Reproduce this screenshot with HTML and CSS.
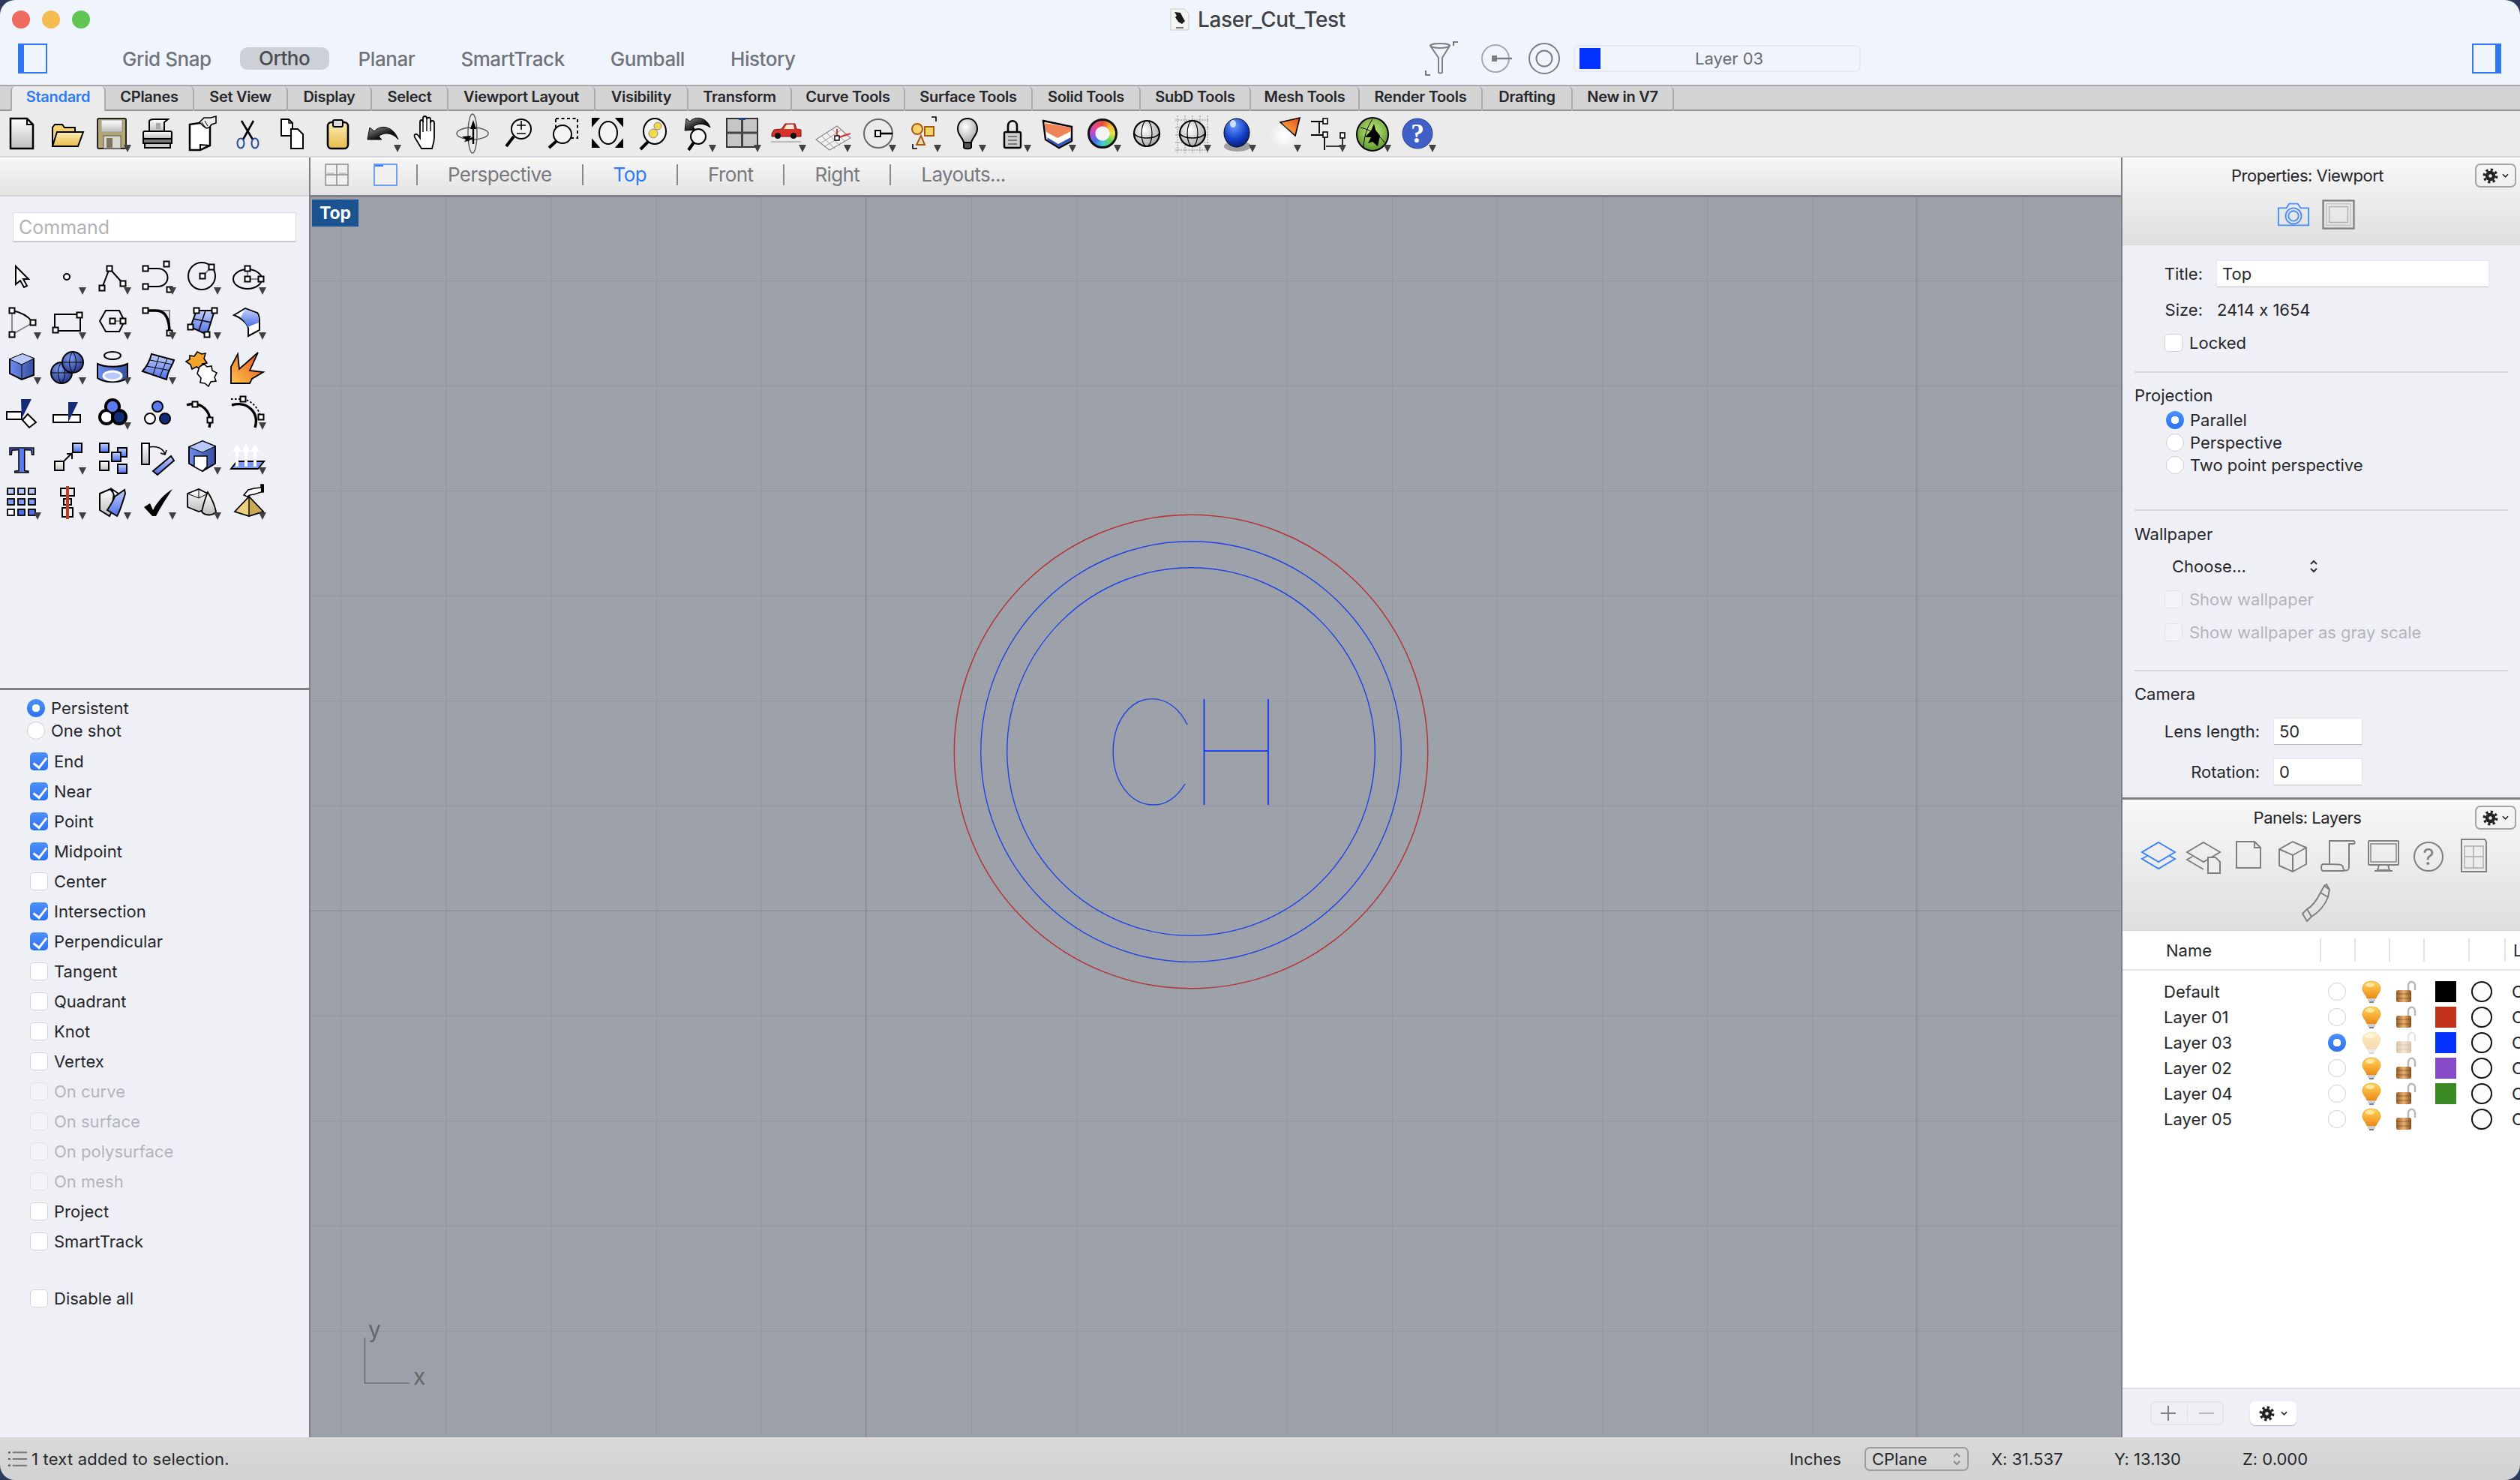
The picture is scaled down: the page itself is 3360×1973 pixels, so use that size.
FILE: index.html
```html
<!DOCTYPE html>
<html lang="en">
<head>
<meta charset="utf-8">
<title>Laser_Cut_Test</title>
<link rel="stylesheet" href="styles.css">
</head>
<body>
<svg class="defs" aria-hidden="true">
  <defs>
    <linearGradient id="gB" x1="0" y1="0" x2="0" y2="1"><stop offset="0" stop-color="#c3d0fa"/><stop offset="1" stop-color="#4c6ee8"/></linearGradient>
    <linearGradient id="gBh" x1="0" y1="0" x2="1" y2="0"><stop offset="0" stop-color="#6f8cf0"/><stop offset="1" stop-color="#34509f"/></linearGradient>
    <linearGradient id="gY" x1="0" y1="0" x2="0" y2="1"><stop offset="0" stop-color="#fbeeb4"/><stop offset="1" stop-color="#e9bb4c"/></linearGradient>
    <linearGradient id="gS" x1="0" y1="0" x2="0" y2="1"><stop offset="0" stop-color="#fff"/><stop offset="1" stop-color="#bdbdbd"/></linearGradient>
    <linearGradient id="gK" x1="0" y1="0" x2="1" y2="1"><stop offset="0" stop-color="#999"/><stop offset=".6" stop-color="#111"/></linearGradient>
    <linearGradient id="gO" x1="0" y1="1" x2="1" y2="0"><stop offset="0" stop-color="#fbc64a"/><stop offset="1" stop-color="#ea4a1e"/></linearGradient>
    <linearGradient id="gBulb" x1="0" y1="0" x2="0" y2="1"><stop offset="0" stop-color="#ffd65c"/><stop offset="1" stop-color="#ee8a16"/></linearGradient>
    <linearGradient id="gLock" x1="0" y1="0" x2="1" y2="0"><stop offset="0" stop-color="#9a5a1e"/><stop offset=".5" stop-color="#e8b478"/><stop offset="1" stop-color="#8a4e18"/></linearGradient>
    <radialGradient id="gSph" cx=".4" cy=".3" r=".8"><stop offset="0" stop-color="#7f9cf5"/><stop offset="1" stop-color="#1a2a78"/></radialGradient>
    <radialGradient id="gSil" cx=".4" cy=".35" r=".8"><stop offset="0" stop-color="#fff"/><stop offset="1" stop-color="#999"/></radialGradient>
    <radialGradient id="gBlue" cx=".4" cy=".25" r=".8"><stop offset="0" stop-color="#6f9cff"/><stop offset=".6" stop-color="#1240c8"/><stop offset="1" stop-color="#051c6a"/></radialGradient>
    <radialGradient id="gGreen" cx=".5" cy=".4" r=".7"><stop offset="0" stop-color="#c6ec7e"/><stop offset="1" stop-color="#4c8a1e"/></radialGradient>
    <radialGradient id="gGlow" cx=".5" cy=".5" r=".5"><stop offset="0" stop-color="#fff"/><stop offset="1" stop-color="#ebebeb"/></radialGradient>
    <rect id="sq" x="-3.5" y="-3.5" width="7" height="7" fill="#fff" stroke="#000" stroke-width="2"/>
    <symbol id="bulb" viewBox="0 0 26 30"><path d="M13 1C6 1 1 5 1 11c0 5 4 7 6 13h12c2-6 6-8 6-13C25 5 20 1 13 1Z" fill="url(#gBulb)" stroke="#d98a1a" stroke-width=".6"/><ellipse cx="11" cy="6" rx="6" ry="3" fill="#ffeeb0" opacity=".8"/><rect x="8" y="24" width="10" height="4" fill="#c9ccd0"/><rect x="10" y="28" width="6" height="2" fill="#7c8088"/></symbol>
    <symbol id="lock" viewBox="0 0 28 30"><path d="M17 14V7c0-7 9-7 9 0v6" fill="none" stroke="#b6b6b6" stroke-width="2.4"/><rect x="1" y="13" width="20" height="16" rx="2.5" fill="url(#gLock)"/><path d="M1 18h20M1 24h20" stroke="#6e3e10" stroke-width="1" opacity=".6"/></symbol>
    <symbol id="gear" viewBox="0 0 24 24"><circle cx="12" cy="12" r="9.4" fill="none" stroke="#222" stroke-width="4" stroke-dasharray="3.7 3.68"/><circle cx="12" cy="12" r="7.6" fill="#222"/><circle cx="12" cy="12" r="2.6" fill="#e8e8e8"/></symbol>
  </defs>
</svg>

<div class="window">
  <header class="titlebar">
    <div class="title-row">
      <div class="lights"><span class="light red"></span><span class="light yellow"></span><span class="light green"></span></div>
      <div class="doc-title">
        <svg class="doc-icon" viewBox="0 0 26 30"><path d="M1 1H19L25 7V29H1Z" fill="#f4f4f4" stroke="#c8c8c8"/><path d="M6 5l8 1 3 6 3 5-4 4-5-3-4-6 2-2Z" fill="#1b1b1b"/><path d="M8 26h10" stroke="#777" stroke-width="2"/></svg>
        <span>Laser_Cut_Test</span>
      </div>
      <div></div>
    </div>
    <div class="tool-row">
      <span class="side-toggle t-left"></span>
      <nav class="modes">
        <span class="mode">Grid Snap</span>
        <span class="mode on">Ortho</span>
        <span class="mode">Planar</span>
        <span class="mode">SmartTrack</span>
        <span class="mode">Gumball</span>
        <span class="mode">History</span>
      </nav>
      <div class="status-icons">
        <svg class="si si-funnel" viewBox="0 0 46 46"><path d="M7 6c0-4 26-4 26 0L23 22V41c0 2-5 2-5 0V22Z M7 6c4 4 22 4 26 0" fill="none" stroke="#7c7e84" stroke-width="2"/><path d="M38 6V1h6M1 39v6h6" fill="none" stroke="#555" stroke-width="1.6"/></svg>
        <svg class="si" viewBox="0 0 46 46"><ellipse cx="20" cy="23" rx="18" ry="18" fill="none" stroke="#a6a8ae" stroke-width="2"/><rect x="15" y="19" width="7" height="8" fill="#7a7c82"/><path d="M22 23h20" stroke="#7a7c82" stroke-width="2.4"/></svg>
        <svg class="si" viewBox="0 0 46 46"><circle cx="23" cy="23" r="20" fill="none" stroke="#7c7e84" stroke-width="2"/><circle cx="23" cy="23" r="10.500" fill="none" stroke="#7c7e84" stroke-width="2"/></svg>
      </div>
      <div class="layer-box"><span class="layer-swatch"></span><span class="layer-name">Layer 03</span></div>
      <span class="side-toggle t-right"></span>
    </div>
  </header>

  <nav class="tabs">
    <span class="tab on">Standard</span><span class="tab">CPlanes</span><span class="tab">Set View</span><span class="tab">Display</span><span class="tab">Select</span><span class="tab">Viewport Layout</span><span class="tab">Visibility</span><span class="tab">Transform</span><span class="tab">Curve Tools</span><span class="tab">Surface Tools</span><span class="tab">Solid Tools</span><span class="tab">SubD Tools</span><span class="tab">Mesh Tools</span><span class="tab">Render Tools</span><span class="tab">Drafting</span><span class="tab">New in V7</span>
  </nav>

  <div class="toolbar">
    <span class="cell"><svg class="ic" viewBox="0 0 60 60"><path d="M14 10H36L44 18V50H14Z" fill="url(#gS)" stroke-width="2.5"/><path d="M36 10V18H44"/></svg></span>
    <span class="cell"><svg class="ic" viewBox="0 0 60 60"><path d="M10 46V22l3-4h10l3 4h14v6" fill="#f6d46a"/><path d="M10 47L16 28H51L44 47Z" fill="url(#gY)"/></svg></span>
    <span class="cell dd"><svg class="ic" viewBox="0 0 60 60"><rect x="10" y="10" width="38" height="40" rx="2" fill="#b3a670" stroke="#222"/><rect x="15" y="12" width="28" height="16" fill="url(#gS)" stroke="#999" stroke-width="1"/><rect x="18" y="33" width="23" height="17" fill="#d8d8d0" stroke="#555" stroke-width="1"/><rect x="22" y="36" width="8" height="13" fill="#7c7660" stroke="none"/></svg></span>
    <span class="cell"><svg class="ic" viewBox="0 0 60 60"><path d="M19 28V14c0-3 4-3 6-3h19l-5 4v13Z" fill="url(#gS)"/><rect x="11" y="27" width="38" height="10" rx="2" fill="url(#gS)"/><rect x="11" y="37" width="38" height="6" fill="#777"/><rect x="13" y="43" width="34" height="6" fill="#ccc"/><rect x="28" y="16" width="6" height="8" fill="#aaa" stroke="none"/></svg></span>
    <span class="cell"><svg class="ic" viewBox="0 0 60 60"><path d="M13 18L40 14V46L27 52H13Z" fill="#fff" stroke-width="2.5"/><path d="M27 52V45L40 46"/><path d="M26 15l6-6h9l7-2v9l-6 2-3 4-4 1-4-3Z" fill="#eee" stroke-width="1.6"/><path d="M29 15l4 6M33 13l4 7" stroke-width="1"/></svg></span>
    <span class="cell"><svg class="ic" viewBox="0 0 60 60"><path d="M22 13L37 38M38 13L24 38" stroke-width="2.6"/><ellipse cx="21" cy="43" rx="4.500" ry="6.500" stroke="#27509c"/><ellipse cx="40" cy="43" rx="4.500" ry="6.500" stroke="#27509c"/></svg></span>
    <span class="cell"><svg class="ic" viewBox="0 0 60 60"><path d="M15 11H25L30 16V33H15Z" fill="#fff"/><path d="M25 11v5h5" stroke-width="1.4"/><path d="M28 24H37L44 31V50H28Z" fill="#fff"/></svg></span>
    <span class="cell"><svg class="ic" viewBox="0 0 60 60"><rect x="17" y="15" width="27" height="35" rx="5" fill="url(#gY)" stroke-width="2.6"/><rect x="24" y="12" width="13" height="9" rx="2" fill="#ddd"/></svg></span>
    <span class="cell dd"><svg class="ic" viewBox="0 0 60 60"><path d="M10 38L13 22L19 27C27 18 44 19 51 38C43 28 31 28 25 34L29 38Z" fill="url(#gK)" stroke="#000" stroke-width="1"/></svg></span>
    <span class="cell"><svg class="ic" viewBox="0 0 60 60"><path d="M22 50L13 35C11 31 15 29 18 33L20 36V15C20 11 24 11 24 15V10C24 6 29 6 29 10V11C29 8 34 8 34 11V16C34 12 39 12 39 16V35C39 42 37 45 36 50Z" fill="#fff" stroke-width="1.8"/><path d="M24 14V28M29 11V27M34 14V27" stroke-width="1.4"/></svg></span>
    <span class="cell"><svg class="ic" viewBox="0 0 60 60"><ellipse cx="30" cy="30" rx="6" ry="26" stroke="#555" stroke-width="1.4"/><ellipse cx="30" cy="30" rx="21" ry="8" stroke="#555" stroke-width="1.4"/><path d="M31 16V44M24 36l-2 3 8-3" stroke-width="2.4"/><path d="M31 12l4 12h-8ZM16 34l12-1-3 8Z" fill="#000" stroke="none"/></svg></span>
    <span class="cell"><svg class="ic" viewBox="0 0 60 60"><circle cx="35" cy="24" r="13" fill="#f4f4f4"/><path d="M25 34L15 47" stroke-width="4"/><path d="M29 19h12M35 13v12M29 30h12" stroke-width="1.6"/></svg></span>
    <span class="cell"><svg class="ic" viewBox="0 0 60 60"><rect x="21" y="10" width="29" height="26" stroke-dasharray="4 3.500"/><circle cx="30" cy="31" r="12" fill="#f4f4f4"/><path d="M22 40L12 49" stroke-width="4"/></svg></span>
    <span class="cell"><svg class="ic" viewBox="0 0 60 60"><ellipse cx="31" cy="29" rx="12" ry="15" fill="#f4f4f4"/><path d="M10 10h8l-8 9ZM50 10h-8l8 9ZM10 48h8l-8-9ZM50 48h-8l8-9Z" fill="#000"/></svg></span>
    <span class="cell"><svg class="ic" viewBox="0 0 60 60"><ellipse cx="33" cy="27" rx="15" ry="17" fill="#f4f4f4"/><circle cx="37" cy="20" r="5" fill="#f2da4a" stroke="#888" stroke-width="1"/><circle cx="31" cy="30" r="6" fill="#f2da4a" stroke="#888" stroke-width="1"/><path d="M24 41L14 51" stroke-width="4"/></svg></span>
    <span class="cell dd"><svg class="ic" viewBox="0 0 60 60"><path d="M13 26L15 10 20 14C27 6 42 8 47 22 39 16 30 16 24 21L27 25Z" fill="url(#gK)" stroke="#000" stroke-width="1"/><circle cx="31" cy="34" r="10" fill="#f4f4f4"/><path d="M25 42L18 52" stroke-width="4"/></svg></span>
    <span class="cell dd"><svg class="ic" viewBox="0 0 60 60"><rect x="9" y="10" width="41" height="38" fill="#c6c6c6" stroke="#333" stroke-width="2"/><path d="M29.500 10V48M9 29H50" stroke="#444" stroke-width="3"/><path d="M25 11h9" stroke="#224c99" stroke-width="2"/></svg></span>
    <span class="cell dd"><svg class="ic" viewBox="0 0 60 60"><path d="M9 30l3-5 10-1 5-7h13l2 7 6 1v9H9Z" fill="#d73026" stroke="#7e1010" stroke-width="1"/><path d="M29 18h9l1 6H25Z" fill="#f6e6dc" stroke="none"/><circle cx="17" cy="33" r="4" fill="#111" stroke="none"/><circle cx="38" cy="33" r="4" fill="#111" stroke="none"/><path d="M8 41H48" stroke="#bbb" stroke-width="2"/></svg></span>
    <span class="cell dd"><svg class="ic" viewBox="0 0 60 60"><path d="M8 38L36 20 54 36 26 52Z" fill="#f2f2f2" stroke="#888" stroke-width="1.2"/><path d="M15 33l18 17M22 29l18 17M29 24l18 17M14 43L42 25M20 47L48 30" stroke="#999" stroke-width="1"/><path d="M36 36L54 30M36 36V24" stroke="#d33" stroke-width="2"/><rect x="33" y="33" width="6" height="6" fill="#fff" stroke="#000" stroke-width="1.4"/></svg></span>
    <span class="cell dd"><svg class="ic" viewBox="0 0 60 60"><ellipse cx="31" cy="30" rx="19" ry="19" stroke="#666"/><rect x="27" y="26" width="7" height="8" fill="#fff"/><path d="M34 30h16" stroke-width="2.6"/></svg></span>
    <span class="cell dd"><svg class="ic" viewBox="0 0 60 60"><path d="M42 8h6v6" stroke-width="1.6"/><path d="M17 44v6h6" stroke-width="1.6"/><circle cx="23" cy="24" r="7" fill="#f4d36a" stroke="#a65a14"/><rect x="33" y="21" width="12" height="12" fill="#f4d36a" stroke="#a65a14"/><path d="M28 33l5 12H22Z" fill="#eadfae" stroke="#a65a14"/></svg></span>
    <span class="cell dd"><svg class="ic" viewBox="0 0 60 60"><path d="M30 10c-7 0-13 5-13 14 0 8 7 12 8 18h10c1-6 8-10 8-18 0-9-6-14-13-14Z" fill="url(#gSil)" stroke-width="2"/><path d="M25 42h10v6c0 3-10 3-10 0Z" fill="#555"/></svg></span>
    <span class="cell dd"><svg class="ic" viewBox="0 0 60 60"><path d="M24 30V20c0-9 12-9 12 0v10" stroke-width="2.6"/><rect x="19" y="28" width="22" height="21" rx="2" fill="#cfcfcf" stroke-width="2.4"/><path d="M24 34h12M24 39h12M24 44h12" stroke="#777" stroke-width="2"/></svg></span>
    <span class="cell dd"><svg class="ic" viewBox="0 0 60 60"><path d="M11 13L49 21V40L32 49 14 38Z" fill="#fff" stroke-width="2.4"/><path d="M12 16L48 22V27L30 36 15 28Z" fill="#ee8458" stroke="none"/><path d="M16 35l15 9 17-9v4L32 48 17 39Z" fill="#3254b4" stroke="none"/></svg></span>
    <span class="cell dd"><span class="wheel"></span></span>
    <span class="cell"><svg class="ic" viewBox="0 0 60 60"><circle cx="29" cy="30" r="17" fill="url(#gSil)" stroke-width="2.2"/><ellipse cx="29" cy="30" rx="7" ry="17" stroke-width="1.2"/><path d="M12 30C18 38 40 38 46 30" stroke-width="1.4"/></svg></span>
    <span class="cell dd"><svg class="ic" viewBox="0 0 60 60"><path d="M7 12H53M7 22H53M7 32H53M7 42H53M7 52H53M10 6V56M20 6V56M30 6V56M40 6V56M50 6V56" stroke="#888" stroke-width="1" stroke-dasharray="2 1.500"/><circle cx="30" cy="30" r="17" fill="url(#gSil)" stroke-width="2.2"/><ellipse cx="30" cy="30" rx="7" ry="17" stroke-width="1.2"/><path d="M13 30C19 38 41 38 47 30" stroke-width="1.4"/></svg></span>
    <span class="cell dd"><svg class="ic" viewBox="0 0 60 60"><ellipse cx="30" cy="47" rx="18" ry="7" fill="#555" stroke="none" opacity=".5"/><ellipse cx="29" cy="29" rx="17" ry="19" fill="url(#gBlue)" stroke="#000" stroke-width="1"/><ellipse cx="24" cy="17" rx="4" ry="5" fill="#cfe0ff" stroke="none"/></svg></span>
    <span class="cell dd"><svg class="ic" viewBox="0 0 60 60"><circle cx="32" cy="32" r="20" fill="url(#gGlow)" stroke="none"/><path d="M27 15L53 9 47 33Z" fill="url(#gO)" stroke="#000" stroke-width="1.600"/><path d="M27 15L47 33 33 20Z" fill="#fff" stroke="none"/></svg></span>
    <span class="cell dd"><svg class="ic" viewBox="0 0 60 60"><path d="M8 14H24M19 14V30M8 32H24M26 52V32" stroke-width="1.8"/><rect x="24" y="10" width="6" height="7" fill="#fff" stroke-width="1.6"/><rect x="24" y="28" width="6" height="7" fill="#fff" stroke-width="1.6"/><rect x="47" y="29" width="6" height="7" fill="#fff" stroke-width="1.6"/><path d="M50 36V52M28 47H48" stroke-width="1.600"/></svg></span>
    <span class="cell dd"><svg class="ic" viewBox="0 0 60 60"><ellipse cx="30" cy="31" rx="21" ry="22" fill="url(#gGreen)" stroke="#000" stroke-width="2"/><path d="M20 35l8-9 4-9 2 8 6 8-3 14-7-6-6 2 4-8Z" fill="#000" stroke="none"/><path d="M30 11C22 22 18 38 18 50M14 22C24 24 40 32 46 42" stroke-width="1"/></svg></span>
    <span class="cell dd"><svg class="ic" viewBox="0 0 60 60"><ellipse cx="30" cy="30" rx="20" ry="20" fill="#3f5fc6" stroke="#2a4296" stroke-width="1"/><text class="qmark" x="30" y="42" text-anchor="middle">?</text></svg></span>
  </div>

  <div class="main">
    <aside class="left">
      <div class="left-head"></div>
      <div class="command"><span>Command</span></div>
      <div class="tool-grid">
        <span class="cell"><svg class="ic" viewBox="0 0 60 60"><path d="M21 17V41L27 36 32 45 36 43 31 34H38Z" fill="#fff"/></svg></span>
        <span class="cell dd"><svg class="ic" viewBox="0 0 60 60"><circle cx="29" cy="31" r="4" fill="#fff"/></svg></span>
        <span class="cell dd"><svg class="ic" viewBox="0 0 60 60"><path d="M16 46L26 20 44 40"/><use href="#sq" x="16" y="46"/><use href="#sq" x="26" y="20"/><use href="#sq" x="44" y="40"/></svg></span>
        <span class="cell dd"><svg class="ic" viewBox="0 0 60 60"><path d="M14 20H30C48 20 48 44 30 44H14"/><use href="#sq" x="14" y="20"/><use href="#sq" x="42" y="14"/><use href="#sq" x="14" y="44"/><use href="#sq" x="46" y="48"/></svg></span>
        <span class="cell dd"><svg class="ic" viewBox="0 0 60 60"><circle cx="29" cy="30" r="18"/><path d="M30 30L42 18" stroke="#888"/><use href="#sq" x="30" y="30"/><use href="#sq" x="42" y="18"/></svg></span>
        <span class="cell dd"><svg class="ic" viewBox="0 0 60 60"><ellipse cx="30" cy="34" rx="19" ry="13"/><path d="M30 20V34H48" stroke="#888"/><use href="#sq" x="30" y="20"/><use href="#sq" x="30" y="34"/><use href="#sq" x="48" y="34"/></svg></span>

        <span class="cell dd"><svg class="ic" viewBox="0 0 60 60"><path d="M16 16V48L44 32" stroke="#888"/><path d="M16 16C28 18 38 24 44 32"/><use href="#sq" x="16" y="16"/><use href="#sq" x="16" y="48"/><use href="#sq" x="44" y="32"/></svg></span>
        <span class="cell dd"><svg class="ic" viewBox="0 0 60 60"><rect x="13" y="21" width="34" height="22"/><use href="#sq" x="14" y="42"/><use href="#sq" x="46" y="22"/></svg></span>
        <span class="cell dd"><svg class="ic" viewBox="0 0 60 60"><path d="M13 30L21 16H39L46 30 39 44H21Z"/><path d="M30 30H44" stroke="#888"/><use href="#sq" x="30" y="30"/><use href="#sq" x="44" y="30"/></svg></span>
        <span class="cell dd"><svg class="ic" viewBox="0 0 60 60"><path d="M14 16H46V46" stroke="#888"/><path d="M14 16H28C40 16 46 26 46 46" stroke-width="3.500"/><use href="#sq" x="14" y="16"/><use href="#sq" x="46" y="46"/></svg></span>
        <span class="cell dd"><svg class="ic" viewBox="0 0 60 60"><path d="M22 16H46L36 48 14 38Z" fill="url(#gB)"/><path d="M34 16L25 43M18 27L42 32" stroke-width="1.500"/><use href="#sq" x="22" y="16"/><use href="#sq" x="46" y="16"/><use href="#sq" x="14" y="38"/><use href="#sq" x="36" y="48"/></svg></span>
        <span class="cell dd"><svg class="ic" viewBox="0 0 60 60"><path d="M12 22L27 13 43 19C46 22 46 26 46 31V42L31 50V40C30 32 20 25 12 22Z" fill="#fff"/><path d="M27 14L42 20C45 24 45 28 45 32L30 38C28 32 24 28 21 25Z" fill="url(#gB)" stroke="none"/></svg></span>

        <span class="cell dd"><svg class="ic" viewBox="0 0 60 60"><path d="M13 21L30 14 45 20V42L29 48 13 40Z" fill="url(#gBh)"/><path d="M13 21L30 14 45 20 29 28Z" fill="#b9c8f8" stroke="none"/><path d="M13 21L29 28 45 20 M29 28V48" stroke-width="1"/></svg></span>
        <span class="cell dd"><svg class="ic" viewBox="0 0 60 60"><circle cx="22" cy="39" r="14" fill="url(#gSph)"/><path d="M8 39H36M22 25C16 32 16 46 22 53M22 25C28 32 28 46 22 53" stroke-width="1"/><circle cx="37" cy="25" r="14" fill="url(#gSph)"/><path d="M23 25H51M37 11C31 18 31 32 37 39M37 11C43 18 43 32 37 39" stroke-width="1"/></svg></span>
        <span class="cell dd"><svg class="ic" viewBox="0 0 60 60"><ellipse cx="30" cy="16" rx="11" ry="5"/><path d="M10 27C20 32 40 32 50 27V46C40 53 20 53 10 46Z" fill="url(#gBh)"/><ellipse cx="30" cy="43" rx="12" ry="6" fill="#b9c8f8" stroke="#fff" stroke-width="3"/></svg></span>
        <span class="cell dd"><svg class="ic" viewBox="0 0 60 60"><path d="M22 14L52 22C50 30 44 34 42 48L10 37C16 30 20 22 22 14Z" fill="url(#gB)"/><path d="M32 17L24 42M43 20L33 45M15 30L47 36M20 22L50 28" stroke-width="1"/></svg></span>
        <span class="cell"><svg class="ic" viewBox="0 0 60 60"><path d="M8 24l5-3V16l6 1 4-6 6 3 5-1-2 7 4 6-6 1-3 7-5-3-6 3-2-6Z" fill="#f2a52a" stroke-width="1.600"/><path d="M26 31l6-4 4 4 6-1 1 6 6 3-3 6 2 5-7 1-3 6-5-4-6-1 1-6-5-6Z" fill="#fff" stroke-width="1.600"/></svg></span>
        <span class="cell"><svg class="ic" viewBox="0 0 60 60"><path d="M8 53V31L17 14 19 34 44 12 33 36 51 38 36 47 33 53Z" fill="url(#gO)" stroke-width="1.800"/></svg></span>

        <span class="cell"><svg class="ic" viewBox="0 0 60 60"><rect x="9" y="31" width="20" height="10" fill="#fff"/><path d="M28 14H42L29 40Z" fill="#142b78" stroke="none"/><path d="M37 34L48 45 39 52 30 42Z" fill="#fff"/></svg></span>
        <span class="cell"><svg class="ic" viewBox="0 0 60 60"><rect x="11" y="35" width="36" height="10" fill="#fff"/><path d="M31 18H44L31 45Z" fill="#142b78" stroke="none"/></svg></span>
        <span class="cell dd"><svg class="ic" viewBox="0 0 60 60"><circle cx="30" cy="24" r="9" fill="#5a7cf0" stroke-width="4"/><circle cx="22" cy="38" r="9" fill="#fff" stroke-width="4"/><circle cx="39" cy="38" r="9" fill="#142b78" stroke-width="4"/><circle cx="30" cy="24" r="7" fill="#5a7cf0" stroke="none"/></svg></span>
        <span class="cell"><svg class="ic" viewBox="0 0 60 60"><circle cx="30" cy="24" r="7" fill="#5a7cf0"/><circle cx="20" cy="40" r="7" fill="#fff"/><circle cx="40" cy="40" r="7" fill="#142b78"/></svg></span>
        <span class="cell"><svg class="ic" viewBox="0 0 60 60"><path d="M9 22C28 16 44 30 39 52" stroke-width="3.400"/><use href="#sq" x="20" y="21"/><use href="#sq" x="40" y="42"/></svg></span>
        <span class="cell dd"><svg class="ic" viewBox="0 0 60 60"><path d="M9 22C30 16 46 32 40 52" stroke-width="3.400"/><path d="M8 14H20M24 14C36 16 44 26 47 36" stroke-dasharray="2.500 2.500" stroke-width="1.800"/><use href="#sq" x="24" y="14"/><use href="#sq" x="48" y="38"/></svg></span>

        <span class="cell"><svg class="ic" viewBox="0 0 60 60"><text class="tmark" x="29" y="52" text-anchor="middle">T</text></svg></span>
        <span class="cell dd"><svg class="ic" viewBox="0 0 60 60"><rect x="13" y="37" width="12" height="12" fill="url(#gS)"/><rect x="37" y="13" width="12" height="12" fill="url(#gB)"/><path d="M25 37L36 26M29 27h7v7"/></svg></span>
        <span class="cell"><svg class="ic" viewBox="0 0 60 60"><rect x="13" y="13" width="12" height="12" fill="url(#gB)"/><rect x="37" y="19" width="12" height="12" fill="url(#gB)"/><rect x="29" y="25" width="12" height="12" fill="url(#gB)"/><rect x="13" y="37" width="12" height="12" fill="url(#gS)"/><rect x="37" y="41" width="12" height="12" fill="url(#gB)"/></svg></span>
        <span class="cell"><svg class="ic" viewBox="0 0 60 60"><rect x="9" y="13" width="10" height="28" fill="url(#gS)"/><path d="M24 50L48 30 52 36 30 55Z" fill="url(#gB)"/><path d="M19 18C30 16 38 20 40 28M34 26l6 2 2-6" stroke-width="1.600"/></svg></span>
        <span class="cell dd"><svg class="ic" viewBox="0 0 60 60"><path d="M12 18L30 10 47 17V40L30 50 12 40Z" fill="url(#gBh)"/><path d="M12 18L30 10 47 17 30 25Z" fill="#b9c8f8" stroke-width="1"/><path d="M19 30H36V44L30 50 19 44Z" fill="#fff" stroke-width="1.400"/></svg></span>
        <span class="cell dd"><svg class="ic" viewBox="0 0 60 60"><path d="M8 47L16 37H52L44 47Z" fill="#7e98f0"/><path d="M14 24H18V44H14ZM26 24H30V44H26ZM38 24H42V44H38Z" fill="#fff" stroke="none"/><path d="M10 24L16 14 22 24ZM22 24L28 14 34 24ZM34 24L40 14 46 24Z" fill="#fff" stroke="none"/></svg></span>

        <span class="cell dd"><svg class="ic" viewBox="0 0 60 60"><g stroke-width="1.800"><rect x="10" y="13" width="9" height="8" fill="#b6c4f6"/><rect x="24" y="13" width="9" height="8" fill="#b6c4f6"/><rect x="38" y="13" width="9" height="8" fill="#b6c4f6"/><rect x="10" y="27" width="9" height="8" fill="#7f98f2"/><rect x="24" y="27" width="9" height="8" fill="#7f98f2"/><rect x="38" y="27" width="9" height="8" fill="#7f98f2"/><rect x="10" y="41" width="9" height="8" fill="#fff"/><rect x="24" y="41" width="9" height="8" fill="#4f6fe8"/><rect x="38" y="41" width="9" height="8" fill="#4f6fe8"/></g></svg></span>
        <span class="cell dd"><svg class="ic" viewBox="0 0 60 60"><rect x="21" y="13" width="18" height="10" fill="#eee"/><rect x="25" y="27" width="10" height="8" fill="#eee"/><rect x="23" y="39" width="14" height="12" fill="#eee"/><path d="M30 10V54" stroke="#c0392b" stroke-width="4"/></svg></span>
        <span class="cell dd"><svg class="ic" viewBox="0 0 60 60"><path d="M13 20L27 14 32 20 28 46 26 50 13 42Z" fill="url(#gS)"/><path d="M29 14L38 20 34 28Z" fill="#fff"/><path d="M33 24L46 15 47 20C44 30 40 44 36 50L23 42C27 36 31 30 33 24Z" fill="url(#gB)"/></svg></span>
        <span class="cell dd"><svg class="ic" viewBox="0 0 60 60"><path d="M12 38L20 33 24 42C30 30 40 20 50 14 42 26 34 38 28 50H23Z" fill="#000" stroke="none"/></svg></span>
        <span class="cell dd"><svg class="ic" viewBox="0 0 60 60"><path d="M10 20L25 14 37 20V40L25 44 10 38Z" fill="url(#gS)" stroke-width="1.800"/><path d="M25 14V26M10 20L25 26 37 20" stroke-width="1"/><path d="M37 18C32 30 30 40 29 44 33 50 44 50 48 44 46 34 42 26 37 18Z" fill="url(#gS)" stroke-width="1.800"/></svg></span>
        <span class="cell dd"><svg class="ic" viewBox="0 0 60 60"><path d="M32 24L51 44 32 50 13 44Z" fill="#ecd27e" stroke-width="1.800"/><path d="M32 24V50L51 44Z" fill="#c9a952" stroke-width="1.400"/><path d="M25 22l6-7 8-2 9-1V8h3v10h-3l-9 3-6 1-3 2Z" fill="#fff" stroke-width="1.600"/><path d="M48 8h4v10h-4Z" fill="#000" stroke="none"/></svg></span>
      </div>

      <div class="hdiv"></div>

      <div class="osnaps">
        <label class="opt radio-opt"><span class="radio on"></span>Persistent</label>
        <label class="opt radio-opt"><span class="radio"></span>One shot</label>
        <div class="osnap-list">
          <label class="opt"><span class="check on"></span>End</label>
          <label class="opt"><span class="check on"></span>Near</label>
          <label class="opt"><span class="check on"></span>Point</label>
          <label class="opt"><span class="check on"></span>Midpoint</label>
          <label class="opt"><span class="check"></span>Center</label>
          <label class="opt"><span class="check on"></span>Intersection</label>
          <label class="opt"><span class="check on"></span>Perpendicular</label>
          <label class="opt"><span class="check"></span>Tangent</label>
          <label class="opt"><span class="check"></span>Quadrant</label>
          <label class="opt"><span class="check"></span>Knot</label>
          <label class="opt"><span class="check"></span>Vertex</label>
          <label class="opt off"><span class="check"></span>On curve</label>
          <label class="opt off"><span class="check"></span>On surface</label>
          <label class="opt off"><span class="check"></span>On polysurface</label>
          <label class="opt off"><span class="check"></span>On mesh</label>
          <label class="opt"><span class="check"></span>Project</label>
          <label class="opt"><span class="check"></span>SmartTrack</label>
        </div>
        <label class="opt disable-all"><span class="check"></span>Disable all</label>
      </div>
    </aside>

    <section class="center">
      <div class="vp-tabs">
        <svg class="vp-ic" viewBox="0 0 32 30"><rect x="1" y="1" width="30" height="28" fill="#f0f0f0" stroke="#8a8a8a" stroke-width="1.500"/><path d="M16 1V29M1 15H31" stroke="#8a8a8a" stroke-width="1.500"/><path d="M3 13h10M19 13h10" stroke="#bbb" stroke-width="1.500"/></svg>
        <svg class="vp-ic second" viewBox="0 0 32 30"><rect x="1" y="1" width="30" height="28" fill="#f0f0f0" stroke="#4f8df5" stroke-width="1.600"/><path d="M2 3H13" stroke="#3478f0" stroke-width="2"/></svg>
        <i class="vp-sep"></i>
        <span class="vp-tab">Perspective</span><i class="vp-sep"></i>
        <span class="vp-tab on">Top</span><i class="vp-sep"></i>
        <span class="vp-tab">Front</span><i class="vp-sep"></i>
        <span class="vp-tab">Right</span><i class="vp-sep"></i>
        <span class="vp-tab">Layouts...</span>
      </div>
      <div class="viewport">
        <svg class="scene" viewBox="0 0 2416 1653">
          <path class="major" d="M741 0V1653M2143 0V1653M0 951.500H2416"/>
          <circle class="c-red" cx="1175" cy="739" r="316"/>
          <circle class="c-blue" cx="1175" cy="739" r="280.500"/>
          <circle class="c-blue" cx="1175" cy="739" r="245.500"/>
          <path class="c-blue" d="M1170 703C1160 682 1143 668.500 1123 668.500C1093 668.500 1071 700 1071 739C1071 778 1093 810 1125 810C1143 810 1157 798 1167 782"/>
          <path class="c-blue thick" d="M1192.500 668.500V810M1278 668.500V810M1192.500 738H1278"/>
          <path class="axis" d="M72.500 1521V1581.500H132"/>
          <text class="axis-t" x="77" y="1521">y</text>
          <text class="axis-t" x="137" y="1584">x</text>
        </svg>
        <span class="vp-label">Top</span>
      </div>
    </section>

    <aside class="right">
      <section class="props">
        <div class="panel-head props-head">
          <div class="panel-title"><span>Properties: Viewport</span></div>
          <span class="gear-btn"><svg class="gear" viewBox="0 0 24 24"><use href="#gear"/></svg><svg class="chev" viewBox="0 0 10 6"><path d="M1 1l4 4 4-4"/></svg></span>
          <div class="head-icons">
            <svg class="hi" viewBox="0 0 46 36"><path d="M2 9H13L17 3H29L33 9H44V33H2Z" fill="none" stroke="#4a8ef7" stroke-width="2"/><circle cx="23" cy="20" r="11" fill="none" stroke="#4a8ef7" stroke-width="2"/><circle cx="23" cy="20" r="7" fill="none" stroke="#4a8ef7" stroke-width="2"/></svg>
            <svg class="hi" viewBox="0 0 46 42"><rect x="1.500" y="1.500" width="43" height="39" fill="none" stroke="#828282" stroke-width="2.500"/><rect x="6" y="6" width="34" height="30" fill="none" stroke="#c4c4c4" stroke-width="1.500"/><rect x="10" y="10" width="26" height="22" fill="none" stroke="#b0b0b0" stroke-width="1.500"/></svg>
          </div>
        </div>
        <div class="frow r-title"><span class="lab short">Title:</span><span class="field wide">Top</span></div>
        <div class="frow r-size"><span class="lab short">Size:</span><span>2414 x 1654</span></div>
        <label class="frow r-locked"><span class="check"></span>Locked</label>
        <hr class="sep s1">
        <div class="heading h-proj">Projection</div>
        <label class="frow radio-row first"><span class="radio on"></span>Parallel</label>
        <label class="frow radio-row"><span class="radio"></span>Perspective</label>
        <label class="frow radio-row"><span class="radio"></span>Two point perspective</label>
        <hr class="sep s2">
        <div class="heading h-wall">Wallpaper</div>
        <div class="frow choose"><span class="choose-txt">Choose...</span><svg class="updown" viewBox="0 0 12 20"><path d="M2 7l4-4 4 4M2 13l4 4 4-4"/></svg></div>
        <label class="frow dis"><span class="check"></span>Show wallpaper</label>
        <label class="frow dis"><span class="check"></span>Show wallpaper as gray scale</label>
        <hr class="sep s3">
        <div class="heading h-cam">Camera</div>
        <div class="frow r-lens"><span class="lab long">Lens length:</span><span class="field narrow">50</span></div>
        <div class="frow r-rot"><span class="lab long">Rotation:</span><span class="field narrow">0</span></div>
      </section>

      <div class="hdiv"></div>

      <section class="layers">
        <div class="panel-head layers-head">
          <div class="panel-title"><span>Panels: Layers</span></div>
          <span class="gear-btn"><svg class="gear" viewBox="0 0 24 24"><use href="#gear"/></svg><svg class="chev" viewBox="0 0 10 6"><path d="M1 1l4 4 4-4"/></svg></span>
          <div class="panel-icons">
            <span class="pi"><svg viewBox="0 0 60 60"><g stroke="#3c84f5"><path d="M30 11L52 24 30 37 8 24Z"/><path d="M15 29L8 33 30 46 52 33 45 29"/></g></svg></span>
            <span class="pi"><svg viewBox="0 0 60 60"><path d="M30 11L52 24 30 37 8 24Z"/><path d="M15 30L8 34 30 47M36 31H46L52 37V52H36Z" fill="#ededed"/></svg></span>
            <span class="pi"><svg viewBox="0 0 60 60"><path d="M18 10H42L50 18V45H18ZM42 10V18H50" transform="translate(-4 0)"/></svg></span>
            <span class="pi"><svg viewBox="0 0 60 60"><path d="M12 20L30 10 48 18V40L30 50 12 42ZM12 20L30 28 48 18M30 28V50" transform="translate(-1 0)"/></svg></span>
            <span class="pi"><svg viewBox="0 0 60 60"><path d="M18 9H50C52 9 52 13 50 13H44V44C44 50 36 50 36 44C36 40 30 40 10 40C6 40 6 49 10 49H38M44 9H18V40"/></svg></span>
            <span class="pi"><svg viewBox="0 0 60 60"><rect x="10" y="9" width="40" height="32" rx="1"/><rect x="13" y="13" width="34" height="24" stroke-width="1.400"/><path d="M24 41L22 48H38L36 41M18 49H42"/></svg></span>
            <span class="pi"><svg viewBox="0 0 60 60"><circle cx="30" cy="30" r="19"/><text class="pq" x="30" y="41" text-anchor="middle">?</text></svg></span>
            <span class="pi"><svg viewBox="0 0 60 60"><path d="M14 7H45L47 10V50H14Z"/><path d="M18 16H43V45H18ZM30 16V45M18 30H43" stroke-width="1.400" stroke="#aaa"/></svg></span>
            <span class="pi"><svg viewBox="0 0 60 60"><path d="M12 46L18 40C26 36 32 26 36 18L41 9 48 14 46 24C42 34 34 44 24 50L18 56Z"/><path d="M18 40L24 50M36 18L46 24M41 9L44 7 48 14"/></svg></span>
          </div>
        </div>
        <div class="layer-table">
          <div class="lt-head">
            <span class="lt-name">Name</span>
            <i class="lt-col c1"></i><i class="lt-col c2"></i><i class="lt-col c3"></i><i class="lt-col c4"></i><i class="lt-col c5"></i><i class="lt-col c6"></i>
            <span class="lt-l">L</span>
          </div>
          <div class="lt-row"><span>Default</span><span class="radio"></span><svg class="bulb"><use href="#bulb"/></svg><svg class="lock"><use href="#lock"/></svg><span class="swatch black"></span><span class="ring"></span><span class="lt-c">C</span></div>
          <div class="lt-row"><span>Layer 01</span><span class="radio"></span><svg class="bulb"><use href="#bulb"/></svg><svg class="lock"><use href="#lock"/></svg><span class="swatch red"></span><span class="ring"></span><span class="lt-c">C</span></div>
          <div class="lt-row current"><span>Layer 03</span><span class="radio on"></span><svg class="bulb"><use href="#bulb"/></svg><svg class="lock"><use href="#lock"/></svg><span class="swatch blue"></span><span class="ring"></span><span class="lt-c">C</span></div>
          <div class="lt-row"><span>Layer 02</span><span class="radio"></span><svg class="bulb"><use href="#bulb"/></svg><svg class="lock"><use href="#lock"/></svg><span class="swatch purple"></span><span class="ring"></span><span class="lt-c">C</span></div>
          <div class="lt-row"><span>Layer 04</span><span class="radio"></span><svg class="bulb"><use href="#bulb"/></svg><svg class="lock"><use href="#lock"/></svg><span class="swatch green"></span><span class="ring"></span><span class="lt-c">C</span></div>
          <div class="lt-row"><span>Layer 05</span><span class="radio"></span><svg class="bulb"><use href="#bulb"/></svg><svg class="lock"><use href="#lock"/></svg><span class="swatch white"></span><span class="ring"></span><span class="lt-c">C</span></div>
        </div>
        <footer class="layers-foot">
          <span class="plusminus"><b class="pm plus"></b><i></i><b class="pm minus"></b></span>
          <span class="gear-white"><svg class="gear" viewBox="0 0 24 24"><use href="#gear"/></svg><svg class="chev" viewBox="0 0 10 6"><path d="M1 1l4 4 4-4"/></svg></span>
        </footer>
      </section>
    </aside>
  </div>

  <footer class="statusbar">
    <svg class="list-ic" viewBox="0 0 28 22"><path d="M1 2h3M1 11h3M1 20h3" stroke="#555" stroke-width="2.200"/><path d="M7 2H27M7 11H27M7 20H27" stroke="#777" stroke-width="2"/></svg>
    <span class="msg">1 text added to selection.</span>
    <div class="coords">
      <span>Inches</span>
      <span class="cplane">CPlane<svg class="updown light" viewBox="0 0 12 20"><path d="M2 7l4-4 4 4M2 13l4 4 4-4"/></svg></span>
      <span>X: 31.537</span>
      <span>Y: 13.130</span>
      <span>Z: 0.000</span>
    </div>
  </footer>
</div>
</body>
</html>
```

FILE: styles.css
```css
* { box-sizing: border-box; }
html, body { margin: 0; padding: 0; }
body {
  width: 3360px;
  height: 1973px;
  background: #2d3a5c;
  font-family: Inter, "Liberation Sans", sans-serif;
  font-size: 22px;
  font-feature-settings: "calt" 0;
  color: #26272b;
  overflow: hidden;
}
.defs { position: absolute; width: 0; height: 0; }

.window {
  width: 3360px;
  height: 1973px;
  display: flex;
  flex-direction: column;
  border-radius: 20px;
  overflow: hidden;
}

/* title bar */
.titlebar {
  height: 115px;
  background: #f0f4fc;
  border-bottom: 2px solid #a8a8aa;
  flex: none;
}
.title-row {
  height: 52px;
  display: grid;
  grid-template-columns: 1fr auto 1fr;
  align-items: center;
}
.lights { display: flex; gap: 16px; padding-left: 16px; }
.light { width: 24px; height: 24px; border-radius: 50%; }
.light.red { background: #ee6a5f; }
.light.yellow { background: #f5bd4f; }
.light.green { background: #61c554; }
.doc-title {
  display: flex;
  align-items: center;
  gap: 11px;
  font-size: 28px;
  font-weight: 500;
  color: #3f4145;
  letter-spacing: -.3px;
  position: relative;
  left: -3px;
}
.doc-icon { width: 26px; height: 30px; }
.tool-row {
  height: 52px;
  display: flex;
  align-items: center;
  padding-left: 24px;
  padding-right: 25px;
}
.side-toggle {
  width: 39px;
  height: 40px;
  border: 2px solid #2f78f2;
  flex: none;
}
.t-left { border-left-width: 8px; }
.t-right { border-right-width: 8px; margin-left: 815px; }
.modes { display: flex; align-items: center; margin-left: 100px; }
.mode {
  font-size: 26px;
  font-weight: 500;
  color: #707379;
  margin-right: 61px;
  letter-spacing: -.45px;
  white-space: nowrap;
}
.mode.on {
  background: #cdd0d6;
  color: #4a4c50;
  border-radius: 10px;
  width: 119px;
  height: 30px;
  line-height: 30px;
  text-align: center;
  margin-left: -23px;
  margin-right: 39px;
}
.status-icons { display: flex; align-items: center; margin-left: auto; gap: 16px; }
.si { width: 46px; height: 46px; }
.si-funnel { margin-right: 12px; }
.layer-box {
  margin-left: 16px;
  width: 383px;
  height: 36px;
  border: 2px solid #e6e9f2;
  border-radius: 6px;
  display: flex;
  align-items: center;
  padding-left: 6px;
  flex: none;
}
.layer-swatch { width: 28px; height: 28px; background: #0433ff; flex: none; }
.layer-name { margin-left: 126px; font-size: 22px; color: #6a6c72; }

/* ribbon tabs */
.tabs {
  height: 33px;
  flex: none;
  background: #d4d4d4;
  border-bottom: 2px solid #929292;
  padding-left: 14px;
  display: grid;
  grid-template-columns: 127px 118px 125px 112px 102px 196px 124px 138px 151px 170px 144px 147px 145px 164px 120px 135px;
}
.tab {
  font-size: 20px;
  font-weight: 600;
  color: #26272b;
  text-align: center;
  line-height: 28px;
  border-right: 2px solid #adadad;
  border-radius: 0 6px 0 0;
  letter-spacing: -.3px;
}
.tab.on {
  color: #2f7bf5;
  background: #ebebeb;
  height: 33px;
  border-left: 2px solid #adadad;
  border-radius: 6px 6px 0 0;
}

/* main toolbar */
.toolbar {
  height: 62px;
  flex: none;
  background: #ebebeb;
  border-bottom: 2px solid #d7d7dc;
  display: flex;
}
.cell {
  position: relative;
  width: 60px;
  height: 60px;
  flex: none;
  display: flex;
  align-items: center;
  justify-content: center;
}
.cell.dd::after {
  content: "";
  position: absolute;
  left: 45px;
  top: 45px;
  border-left: 5px solid transparent;
  border-right: 5px solid transparent;
  border-top: 10px solid #414141;
}
.ic {
  width: 60px;
  height: 60px;
  display: block;
  fill: none;
  stroke: #000;
  stroke-width: 2;
}
.wheel {
  width: 40px;
  height: 40px;
  border-radius: 50%;
  border: 3px solid #111;
  background:
    radial-gradient(circle, #f4f4f4 0 9px, transparent 10px),
    conic-gradient(#e84a3a, #f5b53c, #e9e34a, #5ed65a, #46c8d8, #4a70e8, #b04ad8, #e84a8a, #e84a3a);
}
.qmark { font-family: "Liberation Serif", serif; font-weight: 700; font-size: 36px; fill: #fff; stroke: none; }
.tmark { font-family: "Liberation Serif", serif; font-weight: 700; font-size: 50px; fill: #5a7cf0; stroke: #000; stroke-width: 1.600; }

/* main area */
.main { flex: 1; display: flex; min-height: 0; }

.left {
  width: 414px;
  flex: none;
  background: #eff0f5;
  border-right: 2px solid #7f8084;
  display: flex;
  flex-direction: column;
}
.left-head {
  height: 52px;
  flex: none;
  background: linear-gradient(#f7f7f7, #e3e3e3);
  border-bottom: 2px solid #d6d6da;
}
.command {
  margin: 21px 17px 0;
  height: 40px;
  background: #fff;
  border: 1px solid #d9d9de;
  border-bottom: 2px solid #c9c9ce;
  display: flex;
  align-items: center;
  padding-left: 7px;
  font-size: 25px;
  color: #b2b2b6;
  flex: none;
}
.tool-grid {
  margin-top: 15px;
  display: grid;
  grid-template-columns: repeat(6, 60px);
  grid-auto-rows: 60px;
  height: 579px;
  flex: none;
}
.hdiv { height: 3px; background: #7f8084; flex: none; }

.osnaps { padding-top: 9px; flex: 1; }
.opt {
  display: flex;
  align-items: center;
  height: 40px;
  padding-left: 40px;
  gap: 8px;
  color: #26272b;
}
.opt.off { color: #b4b5ba; }
.opt.off .check { background: #f2f3f7; border-color: #e1e2e6; }
.radio-opt { height: 30px; padding-left: 36px; }
.osnap-list { margin-top: 6px; }
.disable-all { margin-top: 36px; }

.radio {
  width: 24px;
  height: 24px;
  border-radius: 50%;
  background: #fff;
  border: 1px solid #cfcfd3;
  flex: none;
  display: block;
}
.radio.on {
  border: none;
  background: radial-gradient(circle, #fff 0 5px, transparent 5.500px), linear-gradient(#4a90f8, #2f72f0);
}
.check {
  width: 24px;
  height: 24px;
  border-radius: 5px;
  background: #fff;
  border: 1px solid #d3d3d7;
  flex: none;
  position: relative;
  display: block;
}
.check.on { border: none; background: linear-gradient(#4c90f8, #2f72f0); }
.check.on::after {
  content: "";
  position: absolute;
  left: 8px;
  top: 3px;
  width: 8px;
  height: 15px;
  border-right: 3px solid #fff;
  border-bottom: 3px solid #fff;
  transform: rotate(38deg);
}

/* centre */
.center { flex: 1; display: flex; flex-direction: column; min-width: 0; }
.vp-tabs {
  height: 53px;
  flex: none;
  background: linear-gradient(#f7f7f7, #e3e3e3);
  border-bottom: 3px solid #7f8084;
  display: flex;
  align-items: center;
  padding: 0 0 5px 19px;
  gap: 40px;
}
.vp-ic { width: 32px; height: 30px; flex: none; }
.vp-ic.second { margin-left: -7px; margin-right: -15px; }
.vp-sep { width: 2px; height: 28px; background: #8a8a8e; flex: none; }
.vp-tab { font-size: 26px; color: #77797f; letter-spacing: -.6px; }
.vp-tab.on { color: #2f7bf5; }

.viewport {
  flex: 1;
  position: relative;
  background-color: #9da1a9;
  background-image:
    linear-gradient(to right, #92969e 1px, transparent 1px),
    linear-gradient(to bottom, #92969e 1px, transparent 1px);
  background-size: 140.200px 100%, 100% 140px;
  background-position: 40px 0, 0 111px;
}
.scene { position: absolute; inset: 0; width: 100%; height: 100%; fill: none; }
.major { stroke: #888b92; stroke-width: 1.200; }
.c-red { stroke: #b4353a; stroke-width: 1.500; fill: none; }
.c-blue { stroke: #2143e6; stroke-width: 1.400; fill: none; }
.c-blue.thick { stroke: #0f36f0; stroke-width: 1.800; }
.axis { stroke: #62656b; stroke-width: 1.400; }
.axis-t { font-size: 30px; fill: #64676c; font-family: Inter, sans-serif; }
.vp-label {
  position: absolute;
  left: 2px;
  top: 3px;
  width: 62px;
  height: 36px;
  background: #1b5290;
  color: #fff;
  font-weight: 700;
  font-size: 23px;
  text-align: center;
  line-height: 36px;
}

/* right panels */
.right {
  width: 532px;
  flex: none;
  background: #eff0f5;
  border-left: 2px solid #7f8084;
  display: flex;
  flex-direction: column;
  min-width: 0;
}
.props { height: 853px; flex: none; }
.panel-head {
  position: relative;
  background: linear-gradient(#f8f8f8, #dfdfe0);
  border-bottom: 2px solid #dcdce0;
}
.props-head { height: 117px; }
.layers-head { height: 175px; }
.panel-title {
  height: 48px;
  display: flex;
  align-items: center;
  justify-content: center;
  padding-right: 37px;
  font-size: 22px;
  letter-spacing: -.5px;
}
.gear-btn {
  position: absolute;
  right: 5px;
  top: 8px;
  width: 55px;
  height: 32px;
  border: 2px solid #a4a4a8;
  border-radius: 7px;
  display: flex;
  align-items: center;
  justify-content: center;
  gap: 5px;
}
.gear { width: 21px; height: 21px; }
.chev { width: 9px; height: 6px; fill: none; stroke: #222; stroke-width: 1.800; }
.head-icons { display: flex; justify-content: center; align-items: center; gap: 16px; padding-right: 14px; margin-top: 8px; }
.hi { width: 44px; height: 40px; }

.panel-icons { display: flex; flex-wrap: wrap; justify-content: center; padding-right: 14px; margin-top: -2px; }
.pi { width: 60px; height: 60px; display: block; }
.pi svg { width: 60px; height: 60px; fill: none; stroke: #808080; stroke-width: 2; display: block; }
.pq { font-size: 30px; fill: #808080; stroke: none; font-family: Inter, sans-serif; }

.frow { display: flex; align-items: center; height: 30px; padding-left: 56px; gap: 9px; }
.r-title { height: 34px; margin-top: 21px; padding-left: 0; gap: 19px; }
.r-size { height: 34px; margin-top: 14px; padding-left: 0; gap: 19px; }
.r-locked { height: 34px; margin-top: 10px; }
.lab { text-align: right; flex: none; }
.lab.short { width: 107px; }
.lab.long { width: 183px; }
.field {
  background: #fff;
  height: 34px;
  display: flex;
  align-items: center;
  padding-left: 7px;
  box-shadow: 0 1px 0 #bbb, 0 0 0 1px #e6e6ea;
  flex: none;
}
.field.wide { width: 362px; }
.field.narrow { width: 117px; }
.sep { border: 0; height: 2px; background: #d5d6dc; margin: 21px 16px 0; }
.sep.s2 { margin-top: 44px; }
.sep.s3 { margin-top: 35px; }
.heading { height: 30px; line-height: 30px; padding-left: 16px; margin-top: 15px; }
.h-wall { margin-top: 16px; }
.radio-row { padding-left: 58px; gap: 8px; }
.radio-row.first { margin-top: 3px; }
.choose { margin-top: 13px; padding-left: 66px; }
.choose-txt { width: 174px; }
.updown { width: 12px; height: 20px; fill: none; stroke: #333; stroke-width: 2; }
.dis { margin-top: 14px; color: #b4b5ba; }
.dis .check { background: #f2f3f7; border-color: #e1e2e6; }
.r-lens { height: 34px; margin-top: 18px; padding-left: 0; gap: 19px; }
.r-rot { height: 34px; margin-top: 20px; padding-left: 0; gap: 19px; }

.layers { flex: 1; display: flex; flex-direction: column; min-height: 0; }
.layer-table { flex: 1; background: #fff; overflow: hidden; min-height: 0; border-bottom: 2px solid #e0e0e4; }
.lt-head {
  position: relative;
  height: 53px;
  border-bottom: 2px solid #e4e4e6;
  display: flex;
  align-items: center;
  padding-left: 58px;
  margin-bottom: 11px;
}
.lt-col {
  position: absolute;
  top: 10px;
  width: 2px;
  height: 31px;
  background: #e4e4e6;
}
.lt-col.c1 { left: 263px; }
.lt-col.c2 { left: 309px; }
.lt-col.c3 { left: 355px; }
.lt-col.c4 { left: 401px; }
.lt-col.c5 { left: 461px; }
.lt-col.c6 { left: 509px; }
.lt-l { position: absolute; left: 521px; }
.lt-row {
  height: 34px;
  display: grid;
  grid-template-columns: 219px 45px 45px 53px 48px 54px auto;
  align-items: center;
  padding-left: 55px;
}
.bulb { width: 26px; height: 30px; display: block; }
.lock { width: 28px; height: 30px; display: block; }
.current .bulb, .current .lock { opacity: .35; }
.swatch { width: 28px; height: 28px; display: block; }
.swatch.black { background: #000; }
.swatch.red { background: #c3321a; }
.swatch.blue { background: #0433ff; }
.swatch.purple { background: #8649c9; }
.swatch.green { background: #3a8a24; }
.swatch.white { background: #fff; }
.ring { width: 28px; height: 28px; border-radius: 50%; border: 2px solid #111; background: #fcfcfc; display: block; }
.layers-foot {
  height: 64px;
  flex: none;
  display: flex;
  align-items: center;
  padding-left: 37px;
  gap: 35px;
}
.plusminus {
  width: 98px;
  height: 32px;
  border: 2px solid #e4e5ea;
  border-radius: 7px;
  display: flex;
  align-items: center;
  justify-content: space-around;
  padding: 0 4px;
}
.plusminus i { width: 1px; height: 20px; background: #dcdde2; }
.pm { position: relative; width: 20px; height: 20px; display: block; }
.pm::before { content: ""; position: absolute; left: 0; right: 0; top: 9px; height: 2px; background: #808286; }
.pm.minus::before { background: #b8b9be; }
.pm.plus::after { content: ""; position: absolute; top: 0; bottom: 0; left: 9px; width: 2px; background: #808286; }
.gear-white {
  width: 62px;
  height: 32px;
  background: #fff;
  border-radius: 7px;
  box-shadow: 0 1px 1px #b5b5b8;
  display: flex;
  align-items: center;
  justify-content: center;
  gap: 8px;
}

/* status bar */
.statusbar {
  height: 57px;
  flex: none;
  background: linear-gradient(#d9d9d9, #d2d2d2);
  display: flex;
  align-items: center;
  padding-left: 10px;
}
.list-ic { width: 27px; height: 22px; flex: none; }
.msg { margin-left: 5px; letter-spacing: .2px; }
.coords {
  margin-left: auto;
  display: grid;
  grid-template-columns: 100px 169px 164px 171px 370px;
  align-items: center;
}
.cplane {
  width: 139px;
  height: 32px;
  border: 2px solid #9c9c9c;
  border-radius: 7px;
  display: flex;
  align-items: center;
  justify-content: space-between;
  padding: 0 8px;
}
.updown.light { stroke: #8a8a8a; }
```
